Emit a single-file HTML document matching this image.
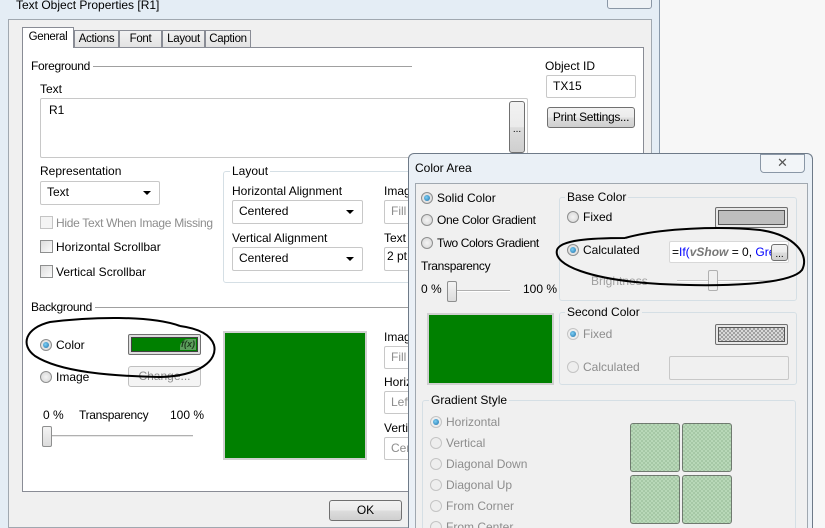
<!DOCTYPE html>
<html style="width:825px;height:528px;overflow:hidden"><head><meta charset="utf-8"><style>
*{box-sizing:border-box;margin:0;padding:0}
body{width:825px;height:528px;overflow:hidden;background:#f7f7f7;font-family:"Liberation Sans",sans-serif;font-size:12px;color:#000;position:relative}
.a{position:absolute}
.t{position:absolute;white-space:nowrap;line-height:14px}
.g{color:#8d8d8d}
.inp{position:absolute;background:#fff;border:1px solid #c8c8c8;border-radius:2px;padding:3px 0 0 6px;white-space:nowrap;overflow:hidden}
.btn{position:absolute;border:1px solid #707070;border-radius:3px;background:linear-gradient(#f2f2f2,#ebebeb 50%,#dddddd 51%,#cfcfcf);text-align:center;line-height:18px;white-space:nowrap;overflow:hidden}
.rad{position:absolute;width:12px;height:12px;border-radius:50%;border:1px solid #8e8f8f;background:radial-gradient(#f4f4f4,#d4d4d4)}
.rad.on::after{content:"";position:absolute;left:2px;top:2px;width:6px;height:6px;border-radius:50%;background:radial-gradient(circle at 40% 40%,#7fd0f5,#1a6ea8)}
.rad.dis{border-color:#c4c4c4;background:#eeeeee}
.chk{position:absolute;width:13px;height:13px;border:1px solid #8e8f8f;background:linear-gradient(135deg,#ddd,#fbfbfb)}
.grp{position:absolute;border:1px solid #d5dfe5;border-radius:3px}
.dd::after{content:"";position:absolute;right:8px;top:9px;border:4px solid transparent;border-top:4px solid #000;border-bottom:0}
.tab{position:absolute;top:30px;height:17px;border:1px solid #898c95;border-bottom:none;background:linear-gradient(#f2f2f2,#e3e3e3);padding:2px 0 0 0;text-align:center;font-size:11.5px;letter-spacing:-0.3px;overflow:hidden;white-space:nowrap}
.tile{position:absolute;width:50px;height:49px;border:1px solid #6f7a6f;border-radius:3px;background:repeating-conic-gradient(#a6c8a6 0 25%,#b8d8b8 0 50%) 0 0/4px 4px}
</style></head><body>
<div class="a" style="left:0;top:0;width:660px;height:528px;background:#e4edf5;border-right:1px solid #8a9aab"></div>
<div class="t" style="left:16px;top:-2px;font-size:12px">Text Object Properties [R1]</div>
<div class="a" style="left:607px;top:-4px;width:45px;height:13px;border:1px solid #8a97a6;border-radius:3px;background:#eef2f6"></div>
<div class="a" style="left:8px;top:19px;width:644px;height:509px;background:#f0f0f0;border:1px solid #a0a8b0"></div>
<div class="a" style="left:22px;top:47px;width:622px;height:445px;background:#fff;border:1px solid #898c95"></div>
<div class="tab" style="left:74px;width:45px">Actions</div>
<div class="tab" style="left:119px;width:43px">Font</div>
<div class="tab" style="left:162px;width:43px">Layout</div>
<div class="tab" style="left:205px;width:46px">Caption</div>
<div class="tab" style="left:22px;top:27px;height:21px;width:52px;background:#fff;padding-top:3px">General</div>
<div class="a" style="left:91px;top:66px;width:321px;border-top:1px solid #a0a0a0"></div>
<div class="t" style="left:31px;top:59px;background:#fff;padding-right:3px;letter-spacing:-0.3px">Foreground</div>
<div class="t" style="left:40px;top:82px">Text</div>
<div class="inp" style="left:40px;top:98px;width:488px;height:60px;padding:4px 0 0 8px">R1</div>
<div class="btn" style="left:509px;top:101px;width:16px;height:52px;line-height:56px;font-size:10px">...</div>
<div class="t" style="left:545px;top:59px">Object ID</div>
<div class="inp" style="left:546px;top:75px;width:90px;height:23px">TX15</div>
<div class="btn" style="left:547px;top:107px;width:88px;height:21px;letter-spacing:-0.3px">Print Settings...</div>
<div class="t" style="left:40px;top:164px">Representation</div>
<div class="inp dd" style="left:40px;top:181px;width:120px;height:24px">Text</div>
<div class="chk" style="left:40px;top:216px;border-color:#c4c4c4;background:#f4f4f4"></div>
<div class="t g" style="left:56px;top:216px;letter-spacing:-0.3px">Hide Text When Image Missing</div>
<div class="chk" style="left:40px;top:240px"></div>
<div class="t" style="left:56px;top:240px">Horizontal Scrollbar</div>
<div class="chk" style="left:40px;top:265px"></div>
<div class="t" style="left:56px;top:265px">Vertical Scrollbar</div>
<div class="grp" style="left:223px;top:171px;width:200px;height:112px"></div>
<div class="t" style="left:230px;top:164px;background:#fff;padding:0 2px">Layout</div>
<div class="t" style="left:232px;top:184px">Horizontal Alignment</div>
<div class="inp dd" style="left:232px;top:200px;width:131px;height:24px">Centered</div>
<div class="t" style="left:232px;top:231px">Vertical Alignment</div>
<div class="inp dd" style="left:232px;top:247px;width:131px;height:24px">Centered</div>
<div class="t" style="left:384px;top:184px">Image</div>
<div class="inp g" style="left:384px;top:200px;width:40px;height:24px">Fill w</div>
<div class="t" style="left:384px;top:231px">Text</div>
<div class="inp" style="left:384px;top:247px;width:40px;height:24px;padding:1px 0 0 2px">2 pt</div>
<div class="a" style="left:95px;top:307px;width:320px;border-top:1px solid #a0a0a0"></div>
<div class="t" style="left:31px;top:300px;background:#fff;padding-right:3px;letter-spacing:-0.3px">Background</div>
<div class="rad on" style="left:40px;top:339px"></div>
<div class="t" style="left:56px;top:338px">Color</div>
<div class="a" style="left:128px;top:334px;width:73px;height:21px;border:1px solid #707070;border-radius:2px;background:#ddd;padding:2px"><div style="width:100%;height:100%;background:#008000;border:1px solid #404040;position:relative"><span style="position:absolute;right:1px;top:1px;font-size:9px;font-style:italic;font-weight:bold;color:#1d3d1d;background:#5c9e5c;border-radius:8px 0 0 0;padding:0 1px;line-height:11px">f(x)</span></div></div>
<div class="rad" style="left:40px;top:371px"></div>
<div class="t" style="left:56px;top:370px">Image</div>
<div class="btn g" style="left:128px;top:366px;width:73px;height:21px;border-color:#c0c0c0;background:#f4f4f4">Change...</div>
<div class="t" style="left:43px;top:408px">0 %</div>
<div class="t" style="left:79px;top:408px;letter-spacing:-0.3px">Transparency</div>
<div class="t" style="left:170px;top:408px">100 %</div>
<div class="a" style="left:43px;top:435px;width:150px;height:2px;border-top:1px solid #b0b0b0;border-bottom:1px solid #e8e8e8"></div>
<div class="a" style="left:42px;top:426px;width:10px;height:21px;border:1px solid #8e8f8f;border-radius:2px;background:linear-gradient(#f4f4f4,#dcdcdc)"></div>
<div class="a" style="left:223px;top:331px;width:144px;height:129px;border:2px solid #d0d0d0;background:#008000"></div>
<div class="t" style="left:384px;top:330px">Image</div>
<div class="inp g" style="left:384px;top:346px;width:40px;height:23px">Fill w</div>
<div class="t" style="left:384px;top:375px">Horiz</div>
<div class="inp g" style="left:384px;top:391px;width:40px;height:23px">Left</div>
<div class="t" style="left:384px;top:421px">Vertic</div>
<div class="inp g" style="left:384px;top:437px;width:40px;height:23px">Cen</div>
<div class="btn" style="left:329px;top:500px;width:73px;height:21px">OK</div>

<div class="a" style="left:408px;top:153px;width:405px;height:375px;background:#eaf0f6;border:1px solid #6e7a88;border-bottom:none;border-radius:6px 6px 0 0"></div>
<div class="t" style="left:415px;top:161px">Color Area</div>
<div class="a" style="left:760px;top:154px;width:45px;height:19px;border:1px solid #8a97a6;border-radius:0 0 4px 4px;background:#f2f5f8;text-align:center;font-size:13px;color:#555;line-height:16px">✕</div>
<div class="a" style="left:415px;top:183px;width:393px;height:345px;background:#f0f0f0;border:1px solid #a0a8b0;border-bottom:none"></div>
<div class="rad on" style="left:421px;top:192px"></div><div class="t" style="left:437px;top:191px">Solid Color</div>
<div class="rad" style="left:421px;top:214px"></div><div class="t" style="left:437px;top:213px;letter-spacing:-0.3px">One Color Gradient</div>
<div class="rad" style="left:421px;top:237px"></div><div class="t" style="left:437px;top:236px;letter-spacing:-0.4px">Two Colors Gradient</div>
<div class="t" style="left:421px;top:259px;letter-spacing:-0.3px">Transparency</div>
<div class="t" style="left:421px;top:282px">0 %</div>
<div class="t" style="left:523px;top:282px">100 %</div>
<div class="a" style="left:447px;top:290px;width:63px;height:2px;border-top:1px solid #b0b0b0;border-bottom:1px solid #fff"></div>
<div class="a" style="left:447px;top:281px;width:10px;height:21px;border:1px solid #8e8f8f;border-radius:2px;background:linear-gradient(#f4f4f4,#dcdcdc)"></div>
<div class="a" style="left:427px;top:313px;width:127px;height:72px;border:2px solid #d0d0d0;background:#008000"></div>
<div class="grp" style="left:559px;top:197px;width:238px;height:104px"></div>
<div class="t" style="left:565px;top:190px;background:#f0f0f0;padding:0 2px">Base Color</div>
<div class="rad" style="left:567px;top:211px"></div><div class="t" style="left:583px;top:210px">Fixed</div>
<div class="a" style="left:715px;top:207px;width:73px;height:21px;border:1px solid #707070;border-radius:2px;padding:2px;background:#e8e8e8"><div style="width:100%;height:100%;background:#bebebe;border:1px solid #555"></div></div>
<div class="rad on" style="left:567px;top:244px"></div><div class="t" style="left:583px;top:243px">Calculated</div>
<div class="inp" style="left:669px;top:241px;width:120px;height:22px;padding:3px 0 0 2px;border-color:#d8d8d8"><span>=</span><span style="color:#00f">If(</span><span style="color:#777;font-style:italic;font-weight:bold">vShow</span> = 0, <span style="color:#00f">Gre</span></div>
<div class="btn" style="left:771px;top:244px;width:17px;height:17px;line-height:20px;font-size:10px">...</div>
<div class="t" style="left:591px;top:274px;color:#a0a0a0">Brightness</div>
<div class="a" style="left:677px;top:280px;width:103px;height:2px;border-top:1px solid #c8c8c8;border-bottom:1px solid #fff"></div>
<div class="a" style="left:708px;top:270px;width:10px;height:21px;border:1px solid #b0b0b0;border-radius:2px;background:#f0f0f0"></div>
<div class="grp" style="left:559px;top:312px;width:238px;height:73px"></div>
<div class="t" style="left:565px;top:305px;background:#f0f0f0;padding:0 2px">Second Color</div>
<div class="rad on dis" style="left:567px;top:328px"></div><div class="t g" style="left:583px;top:327px">Fixed</div>
<div class="a" style="left:715px;top:324px;width:73px;height:21px;border:1px solid #707070;border-radius:2px;padding:2px;background:#e8e8e8"><div style="width:100%;height:100%;border:1px solid #555;background:repeating-conic-gradient(#a0a0a0 0 25%,#d8d8d8 0 50%) 0 0/4px 4px"></div></div>
<div class="rad dis" style="left:567px;top:361px"></div><div class="t g" style="left:583px;top:360px">Calculated</div>
<div class="inp" style="left:669px;top:356px;width:120px;height:24px;background:#f0f0f0;border-color:#c8c8c8"></div>
<div class="grp" style="left:422px;top:400px;width:374px;height:140px"></div>
<div class="t" style="left:429px;top:393px;background:#f0f0f0;padding:0 2px">Gradient Style</div>
<div class="rad on dis" style="left:430px;top:416px"></div><div class="t g" style="left:446px;top:415px">Horizontal</div>
<div class="rad dis" style="left:430px;top:437px"></div><div class="t g" style="left:446px;top:436px">Vertical</div>
<div class="rad dis" style="left:430px;top:458px"></div><div class="t g" style="left:446px;top:457px">Diagonal Down</div>
<div class="rad dis" style="left:430px;top:479px"></div><div class="t g" style="left:446px;top:478px">Diagonal Up</div>
<div class="rad dis" style="left:430px;top:500px"></div><div class="t g" style="left:446px;top:499px">From Corner</div>
<div class="rad dis" style="left:430px;top:521px"></div><div class="t g" style="left:446px;top:520px">From Center</div>
<div class="tile" style="left:630px;top:423px"></div>
<div class="tile" style="left:682px;top:423px"></div>
<div class="tile" style="left:630px;top:475px"></div>
<div class="tile" style="left:682px;top:475px"></div>

<svg class="a" style="left:0;top:0" width="825" height="528">
<path d="M180,326 C150,315 90,317 50,322 C25,328 20,345 35,356 C60,372 110,376 160,377 C200,376 218,360 214,345 C210,333 195,328 180,326" fill="none" stroke="#000" stroke-width="2"/>
<path d="M625,238 C590,238 560,240 557,250 C553,265 590,280 660,284 C720,287 790,285 802,270 C810,255 795,235 760,230 C720,226 660,228 625,238" fill="none" stroke="#000" stroke-width="2"/>
</svg>
</body></html>
